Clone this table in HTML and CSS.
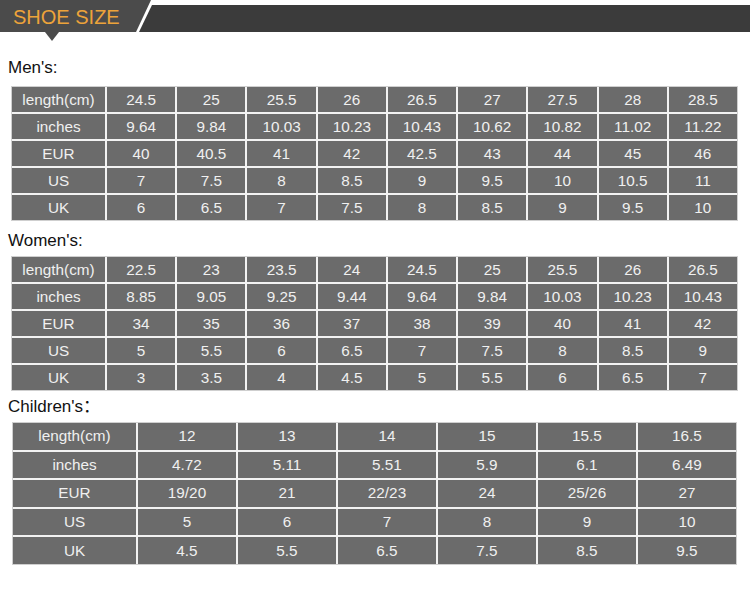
FILE: index.html
```html
<!DOCTYPE html>
<html>
<head>
<meta charset="utf-8">
<link rel="stylesheet" href="styles.css">
</head>
<body>
<div class="header">
  <svg class="header-bg" width="750" height="42" viewBox="0 0 750 42">
    <polygon points="0,0 151,0 136,32 0,32" fill="#4b4b4b"/>
    <polygon points="152,5 750,5 750,32 139,32" fill="#3b3b3b"/>
    <polygon points="45,32 59,32 52,41" fill="#4b4b4b"/>
  </svg>
  <h1 class="title">SHOE SIZE</h1>
</div>

<div class="label label-men">Men's:</div>
<div class="chart chart-adult">
  <div class="cell">length(cm)</div><div class="cell">24.5</div><div class="cell">25</div><div class="cell">25.5</div><div class="cell">26</div><div class="cell">26.5</div><div class="cell">27</div><div class="cell">27.5</div><div class="cell">28</div><div class="cell">28.5</div>
  <div class="cell">inches</div><div class="cell">9.64</div><div class="cell">9.84</div><div class="cell">10.03</div><div class="cell">10.23</div><div class="cell">10.43</div><div class="cell">10.62</div><div class="cell">10.82</div><div class="cell">11.02</div><div class="cell">11.22</div>
  <div class="cell">EUR</div><div class="cell">40</div><div class="cell">40.5</div><div class="cell">41</div><div class="cell">42</div><div class="cell">42.5</div><div class="cell">43</div><div class="cell">44</div><div class="cell">45</div><div class="cell">46</div>
  <div class="cell">US</div><div class="cell">7</div><div class="cell">7.5</div><div class="cell">8</div><div class="cell">8.5</div><div class="cell">9</div><div class="cell">9.5</div><div class="cell">10</div><div class="cell">10.5</div><div class="cell">11</div>
  <div class="cell">UK</div><div class="cell">6</div><div class="cell">6.5</div><div class="cell">7</div><div class="cell">7.5</div><div class="cell">8</div><div class="cell">8.5</div><div class="cell">9</div><div class="cell">9.5</div><div class="cell">10</div>
</div>

<div class="label label-women">Women's:</div>
<div class="chart chart-adult">
  <div class="cell">length(cm)</div><div class="cell">22.5</div><div class="cell">23</div><div class="cell">23.5</div><div class="cell">24</div><div class="cell">24.5</div><div class="cell">25</div><div class="cell">25.5</div><div class="cell">26</div><div class="cell">26.5</div>
  <div class="cell">inches</div><div class="cell">8.85</div><div class="cell">9.05</div><div class="cell">9.25</div><div class="cell">9.44</div><div class="cell">9.64</div><div class="cell">9.84</div><div class="cell">10.03</div><div class="cell">10.23</div><div class="cell">10.43</div>
  <div class="cell">EUR</div><div class="cell">34</div><div class="cell">35</div><div class="cell">36</div><div class="cell">37</div><div class="cell">38</div><div class="cell">39</div><div class="cell">40</div><div class="cell">41</div><div class="cell">42</div>
  <div class="cell">US</div><div class="cell">5</div><div class="cell">5.5</div><div class="cell">6</div><div class="cell">6.5</div><div class="cell">7</div><div class="cell">7.5</div><div class="cell">8</div><div class="cell">8.5</div><div class="cell">9</div>
  <div class="cell">UK</div><div class="cell">3</div><div class="cell">3.5</div><div class="cell">4</div><div class="cell">4.5</div><div class="cell">5</div><div class="cell">5.5</div><div class="cell">6</div><div class="cell">6.5</div><div class="cell">7</div>
</div>

<div class="label label-kids">Children's：</div>
<div class="chart chart-kids">
  <div class="cell">length(cm)</div><div class="cell">12</div><div class="cell">13</div><div class="cell">14</div><div class="cell">15</div><div class="cell">15.5</div><div class="cell">16.5</div>
  <div class="cell">inches</div><div class="cell">4.72</div><div class="cell">5.11</div><div class="cell">5.51</div><div class="cell">5.9</div><div class="cell">6.1</div><div class="cell">6.49</div>
  <div class="cell">EUR</div><div class="cell">19/20</div><div class="cell">21</div><div class="cell">22/23</div><div class="cell">24</div><div class="cell">25/26</div><div class="cell">27</div>
  <div class="cell">US</div><div class="cell">5</div><div class="cell">6</div><div class="cell">7</div><div class="cell">8</div><div class="cell">9</div><div class="cell">10</div>
  <div class="cell">UK</div><div class="cell">4.5</div><div class="cell">5.5</div><div class="cell">6.5</div><div class="cell">7.5</div><div class="cell">8.5</div><div class="cell">9.5</div>
</div>
</body>
</html>
```

FILE: styles.css
```css
html, body {
  margin: 0;
  padding: 0;
  background: #ffffff;
}
body {
  width: 750px;
  height: 596px;
  overflow: hidden;
  font-family: "Liberation Sans", Arial, "Noto Sans CJK SC", sans-serif;
  color: #111;
}
.header {
  position: relative;
  height: 42px;
}
.header-bg {
  position: absolute;
  left: 0;
  top: 0;
}
.title {
  position: relative;
  margin: 0;
  padding: 1px 0 0 13px;
  height: 31px;
  line-height: 32px;
  font-size: 20px;
  font-weight: normal;
  color: #eda33a;
}
.label {
  font-size: 17px;
  line-height: 20px;
  height: 20px;
  padding-left: 8px;
  color: #111;
}
.label-men { margin-top: 16px; }
.label-women { margin-top: 10px; }
.label-kids { margin-top: 6px; }
.chart {
  display: grid;
  gap: 2px;
  background: #f2f2f2;
  border: 1px solid #cfcfcf;
}
.chart-adult {
  margin: 8px 0 0 11px;
  width: 725px;
  grid-template-columns: 93px repeat(9, 1fr);
  grid-auto-rows: 25px;
}
.label-women + .chart-adult { margin-top: 5px; }
.chart-kids {
  margin: 5px 0 0 12px;
  width: 723px;
  grid-template-columns: 123px repeat(6, 1fr);
  grid-auto-rows: 26.6px;
}
.cell {
  background: #6b6b6b;
  color: #f0f0f0;
  font-size: 15.3px;
  display: flex;
  align-items: center;
  justify-content: center;
}
```
